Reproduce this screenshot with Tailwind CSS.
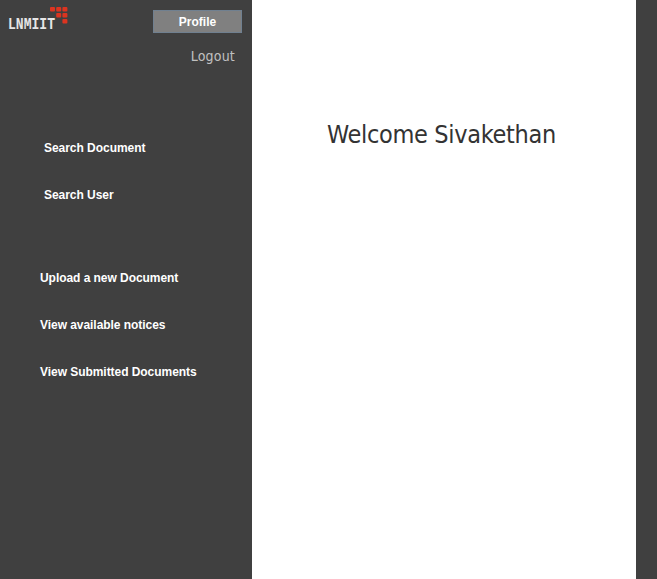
<!DOCTYPE html>
<html><head><meta charset="utf-8"><script src="https://cdn.jsdelivr.net/npm/@tailwindcss/browser@4"></script></head>
<body class="bg-[#404040] overflow-hidden font-['Liberation_Sans',Arial,sans-serif]">
<div class="flex h-[579px] w-[657px]">
<aside class="w-[252px] shrink-0 text-white">
<div class="flex justify-between pt-[5px] pl-2 pr-[10px] h-[46px]">
<svg width="62" height="28" viewBox="0 0 62 28"><text x="0" y="23.5" font-size="17" font-weight="bold" fill="#e6e6e6" font-family="Liberation Mono, monospace" textLength="47" lengthAdjust="spacingAndGlyphs">LNMIIT</text><g fill="#dc3420"><rect x="42" y="2" width="5" height="4.5" rx="1"/><rect x="48.2" y="2" width="5" height="4.5" rx="1"/><rect x="54.4" y="2" width="5" height="4.5" rx="1"/><rect x="48.2" y="8" width="5" height="4.5" rx="1"/><rect x="54.4" y="8" width="5" height="4.5" rx="1"/><rect x="54.4" y="14" width="5" height="4.5" rx="1"/></g></svg>
<button class="mt-[5px] h-[23px] w-[89px] border border-[#708090] bg-[#808080] text-[12px] font-bold">Profile</button>
</div>
<div class="pr-[17px] text-right text-[14px] leading-5 tracking-[0.2px] text-[#c0c0c0] font-['DejaVu_Sans_Condensed','DejaVu_Sans',sans-serif]">Logout</div>
<nav class="pt-[59px] pl-[44px] text-[12px] leading-[47px] font-bold tracking-[-0.04px]"><div>Search Document</div><div>Search User</div></nav>
<nav class="pt-[36px] pl-[40px] text-[12px] leading-[47px] font-bold tracking-[-0.05px]"><div>Upload a new Document</div><div>View available notices</div><div>View Submitted Documents</div></nav>
</aside>
<main class="w-[384px] bg-white pt-[117px] pl-[75px]"><h1 class="text-[25px] leading-9 tracking-[-0.32px] text-[#333] whitespace-nowrap font-['DejaVu_Sans_Condensed','DejaVu_Sans',sans-serif]">Welcome Sivakethan</h1></main>
</div>
</body></html>
